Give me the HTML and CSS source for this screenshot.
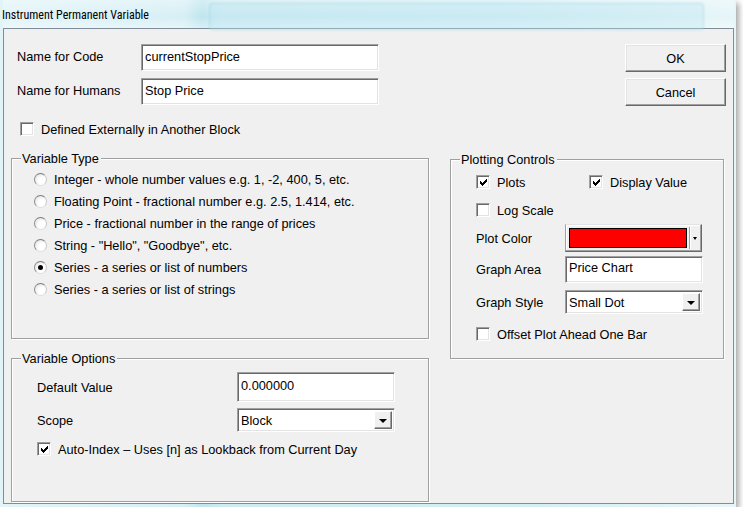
FILE: index.html
```html
<!DOCTYPE html>
<html lang="en">
<head>
  <meta charset="UTF-8">
  <title>Instrument Permanent Variable</title>
  <link rel="stylesheet" href="styles.css">
</head>
<body>
  <div class="window">
    <!-- glass title bar -->
    <div class="titlebar">
      <span class="title">Instrument Permanent Variable</span>
      <span class="glass-panel"></span>
    </div>

    <div class="client">
      <!-- names + OK / Cancel -->
      <div class="top">
        <div class="names">
          <div class="field-row">
            <span class="lbl">Name for Code</span>
            <div class="edit name-edit">currentStopPrice</div>
          </div>
          <div class="field-row">
            <span class="lbl">Name for Humans</span>
            <div class="edit name-edit">Stop Price</div>
          </div>
          <div class="check ext">
            <span class="box"></span>
            <span>Defined Externally in Another Block</span>
          </div>
        </div>
        <div class="buttons">
          <div class="btn">OK</div>
          <div class="btn">Cancel</div>
        </div>
      </div>

      <div class="groups">
        <div class="left-col">
          <div class="group var-type">
            <span class="group-title">Variable Type</span>
            <div class="radio"><span class="dot"></span>Integer - whole number values e.g. 1, -2, 400, 5, etc.</div>
            <div class="radio"><span class="dot"></span>Floating Point - fractional number e.g. 2.5, 1.414, etc.</div>
            <div class="radio"><span class="dot"></span>Price - fractional number in the range of prices</div>
            <div class="radio"><span class="dot"></span>String - "Hello", "Goodbye", etc.</div>
            <div class="radio"><span class="dot on"></span>Series - a series or list of numbers</div>
            <div class="radio"><span class="dot"></span>Series - a series or list of strings</div>
          </div>

          <div class="group var-options">
            <span class="group-title">Variable Options</span>
            <div class="opt-row default-row">
              <span class="opt-lbl">Default Value</span>
              <div class="edit opt-edit">0.000000</div>
            </div>
            <div class="opt-row scope-row">
              <span class="opt-lbl">Scope</span>
              <div class="select opt-select">
                <span>Block</span>
                <span class="drop"><span class="tri"></span></span>
              </div>
            </div>
            <div class="check auto-index">
              <span class="box"><svg viewBox="0 0 7 7"><polygon points="0,2 2,4 7,-1 7,2 2,7 0,5" /></svg></span>
              <span>Auto-Index – Uses [n] as Lookback from Current Day</span>
            </div>
          </div>
        </div>

        <div class="group plotting">
          <span class="group-title">Plotting Controls</span>
          <div class="plot-checks">
            <div class="check">
              <span class="box"><svg viewBox="0 0 7 7"><polygon points="0,2 2,4 7,-1 7,2 2,7 0,5" /></svg></span>
              <span>Plots</span>
            </div>
            <div class="check">
              <span class="box"><svg viewBox="0 0 7 7"><polygon points="0,2 2,4 7,-1 7,2 2,7 0,5" /></svg></span>
              <span>Display Value</span>
            </div>
          </div>
          <div class="check log-scale">
            <span class="box"></span>
            <span>Log Scale</span>
          </div>
          <div class="plot-row color-row">
            <span class="plot-lbl">Plot Color</span>
            <div class="color-combo">
              <span class="swatch"></span>
              <span class="mini-drop"><span class="mini-tri"></span></span>
            </div>
          </div>
          <div class="plot-row area-row">
            <span class="plot-lbl">Graph Area</span>
            <div class="edit plot-edit">Price Chart</div>
          </div>
          <div class="plot-row style-row">
            <span class="plot-lbl">Graph Style</span>
            <div class="select plot-select">
              <span>Small Dot</span>
              <span class="drop"><span class="tri"></span></span>
            </div>
          </div>
          <div class="check offset">
            <span class="box"></span>
            <span>Offset Plot Ahead One Bar</span>
          </div>
        </div>
      </div>
    </div>
  </div>
</body>
</html>
```

FILE: styles.css
```css
body {
  margin: 0;
  background: #fff;
  font-family: "Liberation Sans", Arial, sans-serif;
  font-size: 12.75px;
  color: #000;
}

/* окно с "стеклянной" рамкой */
.window {
  width: 731px;
  padding: 0 2px 3px 3px;
  background: linear-gradient(90deg, #e2f4f8 0%, #d6eff5 25%, #bfe5ee 27.5%, #cdebf3 30%, #d2eef5 70%, #e6f5f8 100%);
  box-shadow: 3px 3px 6px rgba(0, 0, 0, 0.35);
}

.titlebar {
  position: relative;
  height: 28px;
  display: flex;
  align-items: center;
  background: linear-gradient(180deg, rgba(255,255,255,0.35), rgba(255,255,255,0) 60%, rgba(255,255,255,0.4));
}

.title {
  font-family: "Liberation Sans Narrow", "Roboto Condensed", "DejaVu Sans Condensed", Roboto, sans-serif;
  font-size: 12px;
  margin-left: -1px;
  margin-top: 1px;
  position: relative;
  z-index: 1;
}

.glass-panel {
  position: absolute;
  left: 206px;
  right: 30px;
  top: 3px;
  bottom: -2px;
  border: 1px solid rgba(150, 205, 220, 0.5);
  border-radius: 4px;
  background: rgba(190, 230, 240, 0.35);
  filter: blur(1px);
}

.client {
  height: 474px;
  background: #f0f0f0;
  border: 1px solid #7e8d99;
}

/* --- верхний блок --- */
.top {
  display: flex;
  padding-top: 15px;
}

.names {
  margin-left: 13px;
}

.field-row {
  display: flex;
  align-items: center;
  margin-bottom: 7px;
}

.lbl {
  width: 124px;
  margin-top: -2px;
}

.edit {
  box-sizing: border-box;
  background: #fff;
  border: 1px solid;
  border-color: #a0a0a0 #fff #fff #a0a0a0;
  box-shadow: inset 1px 1px 0 #696969, inset -1px -1px 0 #e3e3e3;
  padding-left: 3px;
  display: flex;
  align-items: center;
}

.name-edit {
  width: 238px;
  height: 27px;
  padding-bottom: 2px;
}

.buttons {
  margin-left: auto;
  margin-right: 7px;
  display: flex;
  flex-direction: column;
  gap: 6px;
}

.btn {
  box-sizing: border-box;
  width: 101px;
  height: 28px;
  background: #f0f0f0;
  border: 1px solid;
  border-color: #fff #696969 #696969 #fff;
  box-shadow: inset -1px -1px 0 #a0a0a0, inset 1px 1px 0 #e3e3e3;
  display: flex;
  align-items: center;
  justify-content: center;
}

/* чекбоксы */
.check {
  display: flex;
  align-items: center;
  height: 14px;
  gap: 7px;
}

.box {
  box-sizing: border-box;
  width: 14px;
  height: 14px;
  background: #fff;
  border: 1px solid;
  border-color: #a0a0a0 #fff #fff #a0a0a0;
  box-shadow: inset 1px 1px 0 #696969, inset -1px -1px 0 #e3e3e3;
  display: flex;
  align-items: center;
  justify-content: center;
}

.box svg {
  width: 7px;
  height: 7px;
  margin: 1px 0 0 1px;
  shape-rendering: crispEdges;
}

.box polygon {
  fill: #000;
}

.ext {
  margin-top: 17px;
  margin-left: 3px;
}

/* --- группы --- */
.groups {
  display: grid;
  grid-template-columns: 418px 274px;
  column-gap: 21px;
  margin-top: 22px;
  margin-left: 7px;
}

.left-col {
  display: flex;
  flex-direction: column;
  gap: 19px;
}

.group {
  position: relative;
  box-sizing: border-box;
  border: 1px solid #a0a0a0;
  box-shadow: inset 1px 1px 0 #fff, 1px 1px 0 #fff;
}

.group-title {
  position: absolute;
  top: -8px;
  left: 9px;
  padding: 0 2px 0 1px;
  background: #f0f0f0;
  line-height: 15px;
}

.var-type {
  height: 181px;
  padding: 9px 0 0 22px;
}

.radio {
  display: flex;
  align-items: center;
  height: 22px;
  gap: 7px;
}

.dot {
  box-sizing: border-box;
  width: 13px;
  height: 13px;
  border-radius: 50%;
  border: 1px solid;
  border-color: #7c7c7c #c8c8c8 #dedede #8a8a8a;
  background: radial-gradient(circle at 65% 65%, #fff 35%, #dcdcdc);
  display: flex;
  align-items: center;
  justify-content: center;
}

.dot.on::after {
  content: "";
  width: 5px;
  height: 5px;
  border-radius: 50%;
  background: #000;
}

.var-options {
  height: 144px;
  padding: 13px 0 0 25px;
}

.opt-row {
  display: flex;
  align-items: center;
}

.opt-lbl {
  width: 200px;
}

.opt-edit {
  width: 158px;
  height: 30px;
  align-items: flex-start;
  padding-top: 5px;
}

.scope-row {
  margin-top: 6px;
}

.select {
  box-sizing: border-box;
  background: #fff;
  border: 1px solid;
  border-color: #a0a0a0 #fff #fff #a0a0a0;
  box-shadow: inset 1px 1px 0 #696969, inset -1px -1px 0 #e3e3e3;
  display: flex;
  align-items: center;
  justify-content: space-between;
  padding: 2px 2px 2px 3px;
}

.opt-select {
  width: 158px;
  height: 24px;
}

.drop {
  box-sizing: border-box;
  width: 18px;
  height: 18px;
  background: #f0f0f0;
  border: 1px solid;
  border-color: #fff #696969 #696969 #fff;
  box-shadow: inset -1px -1px 0 #a0a0a0;
  display: flex;
  align-items: center;
  justify-content: center;
}

.tri {
  width: 0;
  height: 0;
  border-left: 4px solid transparent;
  border-right: 4px solid transparent;
  border-top: 4px solid #000;
  margin-top: 1px;
}

.auto-index {
  margin-top: 10px;
}

/* --- Plotting Controls --- */
.plotting {
  height: 200px;
  margin-top: 1px;
  padding: 15px 0 0 25px;
}

.plot-checks {
  display: grid;
  grid-template-columns: 113px auto;
}

.log-scale {
  margin-top: 14px;
}

.plot-row {
  display: flex;
  align-items: center;
}

.plot-lbl {
  width: 89px;
}

.color-row {
  margin-top: 7px;
}

.color-combo {
  box-sizing: border-box;
  width: 137px;
  height: 28px;
  background: #f0f0f0;
  border: 1px solid;
  border-color: #e3e3e3 #696969 #696969 #a0a0a0;
  box-shadow: inset -1px -1px 0 #a0a0a0, inset 1px 1px 0 #fff;
  display: flex;
  align-items: center;
  padding: 2px 2px 2px 3px;
}

.swatch {
  box-sizing: border-box;
  width: 118px;
  height: 20px;
  background: #ff0000;
  border: 1px solid #000;
}

.mini-drop {
  box-sizing: border-box;
  flex: 1;
  height: 22px;
  margin-left: 2px;
  border-left: 1px solid #a0a0a0;
  box-shadow: inset 1px 0 0 #fff;
  display: flex;
  align-items: center;
  justify-content: center;
}

.mini-tri {
  width: 0;
  height: 0;
  border-left: 2px solid transparent;
  border-right: 2px solid transparent;
  border-top: 3px solid #000;
}

.area-row {
  margin-top: 4px;
}

.plot-edit {
  width: 138px;
  height: 27px;
  align-items: flex-start;
  padding-top: 3px;
}

.style-row {
  margin-top: 7px;
}

.plot-select {
  width: 138px;
  height: 24px;
}

.offset {
  margin-top: 13px;
}
```
